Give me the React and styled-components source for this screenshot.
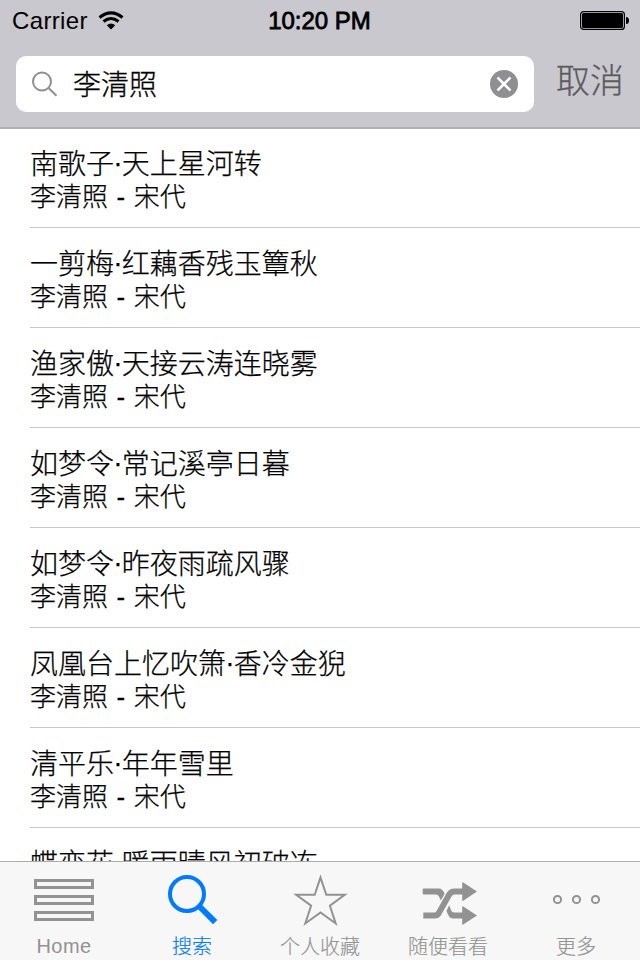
import styled, { createGlobalStyle } from "styled-components";

const GlobalStyle = createGlobalStyle`
  * {
    box-sizing: border-box;
  }

  body {
    margin: 0;
    background: #fff;
    font-family: "Liberation Sans", "Noto Sans CJK SC", sans-serif;
    color: #000;
  }
`;

const Screen = styled.div`
  width: 640px;
  height: 960px;
  display: flex;
  flex-direction: column;
  overflow: hidden;
`;

const Header = styled.header`
  flex: none;
  height: 129px;
  background: #c9c8ce;
  border-bottom: 2px solid #b0b0b4;
`;

const StatusBar = styled.div`
  height: 41px;
  padding: 0 11px 0 12px;
  display: grid;
  grid-template-columns: 1fr auto 1fr;
  align-items: center;
`;

const Carrier = styled.div`
  display: flex;
  align-items: center;
  gap: 10px;
  padding-top: 1px;
  font-size: 24px;
  line-height: 40px;
  letter-spacing: 0.35px;
`;

const Clock = styled.div`
  padding: 1px 2px 0 0;
  font-size: 24px;
  line-height: 40px;
  -webkit-text-stroke: 0.8px #000;
`;

const Battery = styled.svg`
  justify-self: end;
`;

const SearchBar = styled.div`
  display: flex;
  padding: 15px 16px 0;
`;

const SearchField = styled.div`
  width: 518px;
  height: 56px;
  padding: 0 16px;
  display: flex;
  align-items: center;
  background: #fff;
  border-radius: 10px;
`;

const Query = styled.div`
  flex: 1;
  margin-left: 15px;
  padding-top: 3px;
  font-size: 28px;
  line-height: 53px;
  font-weight: 300;
  -webkit-text-stroke: 0.3px #000;
`;

const Cancel = styled.div`
  margin: -3px 0 0 22px;
  font-size: 34px;
  line-height: 56px;
  font-weight: 300;
  color: #5b5b5d;
  white-space: nowrap;
  -webkit-text-stroke: 0.3px #5b5b5d;
`;

const List = styled.main`
  flex: 1;
  min-height: 0;
  overflow: hidden;
  padding-left: 30px;
`;

const Row = styled.div`
  height: ${(props) => (props.$first ? 99 : 100)}px;
  padding-top: ${(props) => (props.$first ? 19 : 20)}px;
  border-bottom: 1px solid #c8c7cc;
  font-weight: 300;
  white-space: nowrap;
  -webkit-text-stroke: 0.25px #000;
`;

const Title = styled.div`
  font-size: 28px;
  line-height: 34px;
`;

const Dot = styled.span`
  margin: 0 -0.75px;
  line-height: 0;
  vertical-align: 2px;
`;

const Author = styled.div`
  font-size: 26px;
  line-height: 30px;
  word-spacing: 1.3px;
`;

const TabBar = styled.nav`
  flex: none;
  height: 99px;
  display: grid;
  grid-template-columns: repeat(5, 1fr);
  background: #f7f7f7;
  border-top: 1px solid #acacac;
`;

const Tab = styled.div`
  display: flex;
  flex-direction: column;
  align-items: center;
  color: ${(props) => (props.$active ? "#007aff" : "#929292")};

  svg {
    display: block;
    margin-top: 8px;
  }
`;

const TabLabel = styled.div`
  margin-top: ${(props) => (props.$latin ? 2 : 3)}px;
  font-size: 20px;
  line-height: 28px;
  font-weight: 300;
  letter-spacing: ${(props) => (props.$latin ? "0.4px" : "0")};
  -webkit-text-stroke: ${(props) => (props.$latin ? "0" : "0.15px")} currentColor;
`;

const WifiIcon = () => (
  <svg width="26" height="20" viewBox="0 0 26 20" fill="none" stroke="#000">
    <path d="M1.5 6.5Q13 -2.8 24.5 6.5" strokeWidth="3" />
    <path d="M5.5 10.5Q13 4.4 20.5 10.5" strokeWidth="3" />
    <path d="M13 18.5L8.8 14.2Q13 10.8 17.2 14.2Z" fill="#000" stroke="none" />
  </svg>
);

const BatteryIcon = () => (
  <Battery width="49" height="19" viewBox="0 0 49 19">
    <rect x="0.6" y="0.6" width="43.8" height="17.8" rx="3" fill="none" stroke="#000" strokeWidth="1.2" />
    <rect x="2" y="2" width="41" height="15" rx="1.5" />
    <path d="M46 6q3 0 3 3.5t-3 3.5z" />
  </Battery>
);

const SearchIcon = () => (
  <svg width="26" height="26" viewBox="0 0 26 26" fill="none" stroke="#8e8e93" strokeWidth="2">
    <circle cx="10" cy="10.5" r="9" />
    <path d="M16.5 17l8 7.8" />
  </svg>
);

const ClearIcon = () => (
  <svg width="28" height="28" viewBox="0 0 28 28">
    <circle cx="14" cy="14" r="14" fill="#8e8e93" />
    <path d="M7.5 7.5l13 13M20.5 7.5l-13 13" stroke="#fff" strokeWidth="2.5" />
  </svg>
);

const HomeIcon = () => (
  <svg width="60" height="60" viewBox="0 0 60 60" fill="none" stroke="currentColor" strokeWidth="3">
    <rect x="1.5" y="10.5" width="57" height="7" />
    <rect x="1.5" y="26.5" width="57" height="7" />
    <rect x="1.5" y="42.5" width="57" height="7" />
  </svg>
);

const SearchTabIcon = () => (
  <svg width="60" height="60" viewBox="0 0 60 60" fill="none" stroke="currentColor">
    <circle cx="25" cy="24" r="17" strokeWidth="4" />
    <path d="M37 36l16.2 16.2" strokeWidth="6" />
  </svg>
);

const StarIcon = () => (
  <svg width="60" height="60" viewBox="0 0 60 60" fill="none" stroke="currentColor" strokeWidth="2">
    <path d="M30.5 7.5L36.3 24.8H54.8L39.9 35.7L45.7 53.5L30.5 42.5L15.3 53.5L21.1 35.7L6.2 24.8H24.7Z" />
  </svg>
);

const ShuffleIcon = () => (
  <svg width="60" height="60" viewBox="0 0 60 60" fill="currentColor">
    <path d="M5.5 18.5H21Q24.5 18.5 26.8 24L23 30.7L20.8 26.3Q19.8 24.5 18 24.5H5.5Q4.7 24.5 4.7 23.7V19.3Q4.7 18.5 5.5 18.5Z" />
    <path d="M31.2 35.3L33.2 40.5Q34.2 42.5 36 42.5H46V48.5H34.5Q31 48.5 28.5 41Z" />
    {/* gap where the strands cross */}
    <path d="M20.5 43.5L32 23" stroke="#f7f7f7" strokeWidth="8.6" />
    <path
      d="M5.3 45.5H16.5Q19.6 45.5 21.2 42.3L31.2 24.5Q33 21.5 36.5 21.5H46"
      fill="none"
      stroke="currentColor"
      strokeWidth="6"
    />
    <path d="M44.2 13Q44.2 12 45.2 12.4L59 21.5L45.2 30.8Q44.2 31.2 44.2 30.2ZM44.2 37Q44.2 36 45.2 36.4L59 45.5L45.2 54.6Q44.2 55 44.2 54Z" />
  </svg>
);

const MoreIcon = () => (
  <svg width="60" height="60" viewBox="0 0 60 60" fill="none" stroke="currentColor" strokeWidth="2">
    <circle cx="11.5" cy="29.5" r="3.6" />
    <circle cx="30.5" cy="29.5" r="3.6" />
    <circle cx="49.5" cy="29.5" r="3.6" />
  </svg>
);

const poems = [
  ["南歌子", "天上星河转"],
  ["一剪梅", "红藕香残玉簟秋"],
  ["渔家傲", "天接云涛连晓雾"],
  ["如梦令", "常记溪亭日暮"],
  ["如梦令", "昨夜雨疏风骤"],
  ["凤凰台上忆吹箫", "香冷金猊"],
  ["清平乐", "年年雪里"],
  ["蝶恋花", "暖雨晴风初破冻"],
];

const tabs = [
  { label: "Home", icon: HomeIcon, latin: true },
  { label: "搜索", icon: SearchTabIcon, active: true },
  { label: "个人收藏", icon: StarIcon },
  { label: "随便看看", icon: ShuffleIcon },
  { label: "更多", icon: MoreIcon },
];

function App() {
  return (
    <>
      <GlobalStyle />
      <Screen lang="zh-CN">
        <Header>
          <StatusBar>
            <Carrier>
              Carrier
              <WifiIcon />
            </Carrier>
            <Clock>10:20 PM</Clock>
            <BatteryIcon />
          </StatusBar>
          <SearchBar>
            <SearchField>
              <SearchIcon />
              <Query>李清照</Query>
              <ClearIcon />
            </SearchField>
            <Cancel>取消</Cancel>
          </SearchBar>
        </Header>
        <List>
          {poems.map(([tune, line], i) => (
            <Row key={line} $first={i === 0}>
              <Title>
                {tune}
                <Dot>·</Dot>
                {line}
              </Title>
              <Author>李清照 - 宋代</Author>
            </Row>
          ))}
        </List>
        <TabBar>
          {tabs.map(({ label, icon: Icon, active, latin }) => (
            <Tab key={label} $active={active}>
              <Icon />
              <TabLabel $latin={latin}>{label}</TabLabel>
            </Tab>
          ))}
        </TabBar>
      </Screen>
    </>
  );
}

export default App;
